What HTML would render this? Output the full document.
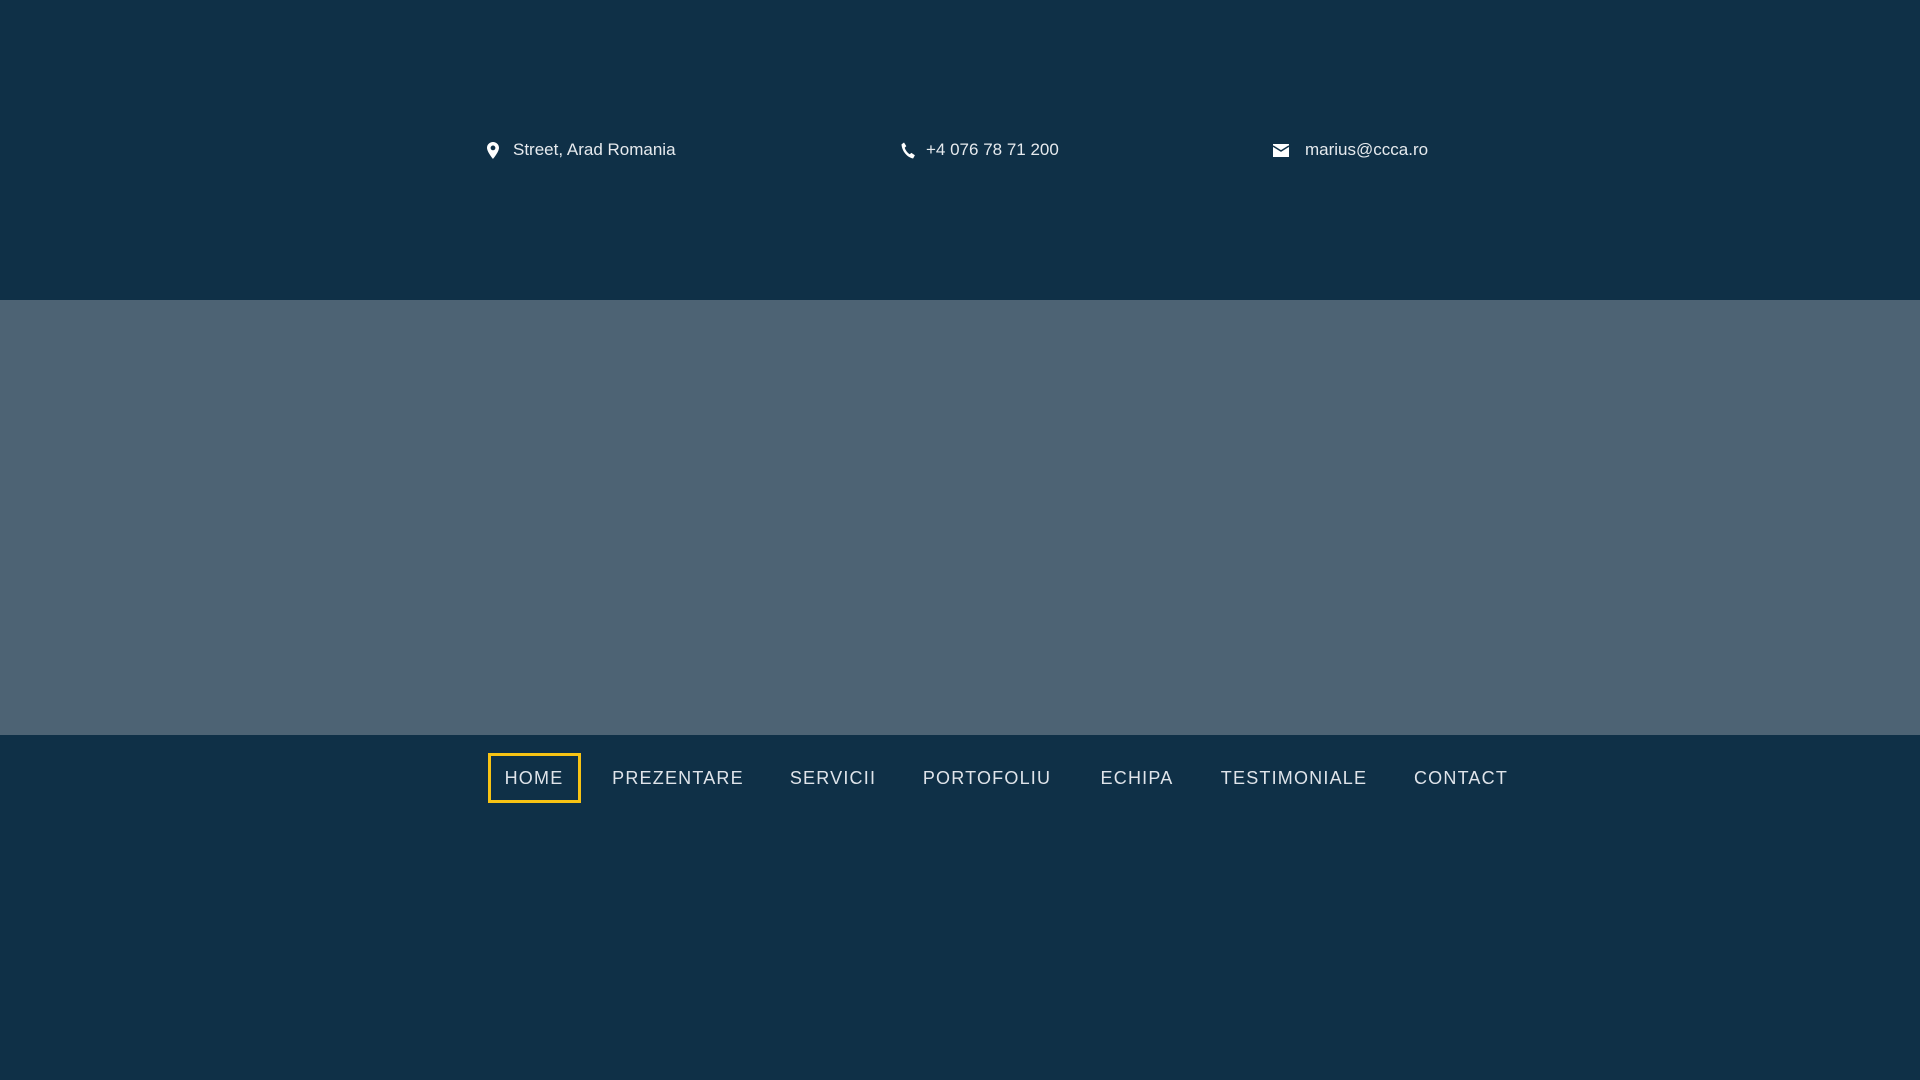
<!DOCTYPE html>
<html><head><meta charset="utf-8"><style>
body{margin:0;width:1920px;height:1080px;background:#0f3047;font-family:"Liberation Sans",sans-serif;overflow:hidden;position:relative}
.t{position:absolute;color:#e6eaee;font-size:17px;top:140px;white-space:nowrap}
.ic{position:absolute}
.band{position:absolute;left:0;top:300px;width:1920px;height:435px;background:#4d6374}
.n{position:absolute;top:768px;color:#dfe4ea;font-size:18px;letter-spacing:1.2px;transform:translateX(-50%);white-space:nowrap}
.home{position:absolute;left:488px;top:753px;width:87px;height:44px;border:3px solid #f7c314}
</style></head><body>
<svg class="ic" style="left:487px;top:142px" width="12" height="17" viewBox="0 0 12 17"><path d="M6 0C2.7 0 0 2.6 0 5.8 0 10 6 17 6 17s6-7 6-11.2C12 2.6 9.3 0 6 0zm0 8.3A2.4 2.4 0 1 1 6 3.5a2.4 2.4 0 0 1 0 4.8z" fill="#fff"/></svg>
<div class="t" style="left:513px">Street, Arad Romania</div>
<svg class="ic" style="left:901px;top:142px" width="15" height="17" viewBox="0 0 15 17"><path d="M3 0.5l2.3 3.6-1.6 1.6c.8 2.6 2.6 5 5 6.6l1.7-1.4 3.5 2.4-1.8 3.2C6.5 15.5 1 9.5 0.5 2.4z" fill="#fff"/></svg>
<div class="t" style="left:926px">+4 076 78 71 200</div>
<svg class="ic" style="left:1273px;top:144px" width="16" height="13" viewBox="0 0 16 13"><rect x="0" y="0" width="16" height="13" fill="#fff"/><path d="M0 2l8 5 8-5" stroke="#0f3047" stroke-width="1.5" fill="none"/></svg>
<div class="t" style="left:1305px">marius@ccca.ro</div>
<div class="band"></div>
<div class="home"></div>
<div class="n" style="left:534px">HOME</div>
<div class="n" style="left:678px">PREZENTARE</div>
<div class="n" style="left:833px">SERVICII</div>
<div class="n" style="left:987px">PORTOFOLIU</div>
<div class="n" style="left:1137px">ECHIPA</div>
<div class="n" style="left:1294px">TESTIMONIALE</div>
<div class="n" style="left:1461px">CONTACT</div>
</body></html>
